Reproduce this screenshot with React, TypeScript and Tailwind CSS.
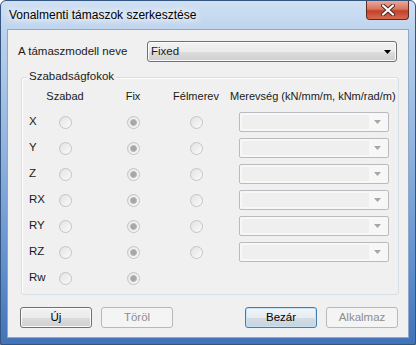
import React from 'react';

const rows = [
  { name: 'X', semi: true },
  { name: 'Y', semi: true },
  { name: 'Z', semi: true },
  { name: 'RX', semi: true },
  { name: 'RY', semi: true },
  { name: 'RZ', semi: true },
  { name: 'Rw', semi: false },
];

const Radio: React.FC<{ checked?: boolean }> = ({ checked }) => (
  <div className="w-[13px] h-[13px] rounded-full border border-[#c4c4c4] bg-gradient-to-br from-[#e2e2e2] to-[#fbfbfb] flex items-center justify-center">
    {checked && (
      <div className="w-[7px] h-[7px] rounded-full border border-[#b4b4b4] bg-[#a7a7a7] shadow-[0_0_0_1px_#f2f2f2]" />
    )}
  </div>
);

const DisabledCombo: React.FC = () => (
  <div className="w-[150px] h-[20px] border border-[#b8bcc0] rounded-[2px] bg-[#f7f7f7] flex p-[2px]">
    <div className="flex-1 bg-[#efefef]" />
    <div className="w-[17px] flex items-center justify-center">
      <svg width="7" height="4" viewBox="0 0 7 4">
        <path d="M0 0h7L3.5 4z" fill="#a6a6a6" />
      </svg>
    </div>
  </div>
);

const Button: React.FC<{ label: string; variant?: 'normal' | 'disabled' | 'default' }> = ({
  label,
  variant = 'normal',
}) => {
  if (variant === 'disabled') {
    return (
      <div className="w-[72px] h-[21px] rounded-[3px] border border-[#b5b9bc] bg-[#f4f4f4] flex items-center justify-center text-[#8d8d8d]">
        {label}
      </div>
    );
  }
  if (variant === 'default') {
    return (
      <div className="w-[72px] h-[21px] rounded-[3px] border border-[#3c7fb1] bg-[linear-gradient(#f1f5f8_0%,#e6ecf1_50%,#d4dde5_51%,#c9d3dc_100%)] shadow-[inset_0_0_0_1px_#c5e4f7] flex items-center justify-center text-black">
        {label}
      </div>
    );
  }
  return (
    <div className="w-[72px] h-[21px] rounded-[3px] border border-[#707070] bg-[linear-gradient(#f2f2f2_0%,#ebebeb_50%,#dddddd_51%,#cfcfcf_100%)] shadow-[inset_0_0_0_1px_#fbfbfb] flex items-center justify-center text-black">
      {label}
    </div>
  );
};

export default function App() {
  return (
    <div className="w-[416px] h-[345px] font-['Liberation_Sans',Arial,sans-serif] text-[11px] text-[#1a1a1a] leading-none">
      <div className="w-full h-full flex flex-col rounded-t-[6px] border border-[#33557f] bg-[linear-gradient(#cfe0f3_0%,#b7cfeb_12%,#8fb2de_45%,#5d8ccb_80%,#4272b8_100%)]">
        {/* title bar */}
        <div className="h-[28px] flex items-start">
          <div className="pl-[8px] pt-[8px] text-[12px] text-black [text-shadow:0_0_6px_#ffffff,0_0_10px_#ffffff,0_0_14px_#ffffff]">
            Vonalmenti támaszok szerkesztése
          </div>
          <div className="ml-auto mr-[6px] w-[43px] h-[19px] rounded-b-[4px] border border-t-0 border-[#5a2a22] bg-[linear-gradient(#e9a99a_0%,#d9745e_45%,#c4412a_55%,#d86a4f_100%)] flex items-center justify-center">
            <svg width="14" height="12" viewBox="0 0 14 12">
              <path d="M2 1.5l10 9M12 1.5l-10 9" stroke="#4a2520" strokeWidth="4" strokeLinecap="round" />
              <path d="M2 1.5l10 9M12 1.5l-10 9" stroke="#ffffff" strokeWidth="2.2" strokeLinecap="round" />
            </svg>
          </div>
        </div>

        {/* client area */}
        <div className="flex-1 mx-[6px] mb-[6px] border border-[#8ea8c9] bg-[#f0f0f0] flex flex-col">
          <div className="flex items-center mt-[11px] pl-[10px]">
            <div className="w-[129px] text-[11.5px]">A támaszmodell neve</div>
            <div className="w-[250px] h-[21px] rounded-[3px] border border-[#707070] bg-[linear-gradient(#f2f2f2_0%,#ebebeb_50%,#dddddd_51%,#cfcfcf_100%)] shadow-[inset_0_0_0_1px_#fbfbfb] flex items-center pl-[3px] pr-[5px]">
              <span className="flex-1 text-[11.5px]">Fixed</span>
              <svg width="7" height="4" viewBox="0 0 7 4">
                <path d="M0 0h7L3.5 4z" fill="#000" />
              </svg>
            </div>
          </div>

          {/* group box */}
          <div className="relative mt-[15px] ml-[13px] w-[378px] h-[218px] border border-[#d5dfe5] rounded-[3px] shadow-[inset_1px_1px_0_#ffffff] pl-[7px] pt-[5px]">
            <div className="absolute -top-[7px] left-[5px] px-[2px] bg-[#f0f0f0] text-[11.5px]">Szabadságfokok</div>
            <div className="flex items-center h-[26px] whitespace-nowrap">
              <div className="w-[16px] shrink-0" />
              <div className="w-[40px] min-w-0 shrink-0 flex justify-center">Szabad</div>
              <div className="w-[96px] min-w-0 shrink-0 flex justify-center">Fix</div>
              <div className="w-[30px] min-w-0 shrink-0 flex justify-center">Félmerev</div>
              <div className="pl-[19px]">Merevség (kN/mm/m, kNm/rad/m)</div>
            </div>
            {rows.map((r) => (
              <div key={r.name} className="flex items-center h-[26px] text-[11.5px]">
                <div className="w-[16px] shrink-0">{r.name}</div>
                <div className="w-[40px] shrink-0 flex justify-center">
                  <Radio />
                </div>
                <div className="w-[96px] shrink-0 flex justify-center">
                  <Radio checked />
                </div>
                <div className="w-[30px] shrink-0 flex justify-center">{r.semi && <Radio />}</div>
                {r.semi && (
                  <div className="ml-[28px]">
                    <DisabledCombo />
                  </div>
                )}
              </div>
            ))}
          </div>

          {/* buttons */}
          <div className="flex items-center mt-[12px] pl-[12px] text-[11.5px]">
            <Button label="Új" />
            <div className="ml-[9px]">
              <Button label="Töröl" variant="disabled" />
            </div>
            <div className="ml-[72px]">
              <Button label="Bezár" variant="default" />
            </div>
            <div className="ml-[9px]">
              <Button label="Alkalmaz" variant="disabled" />
            </div>
          </div>
        </div>
      </div>
    </div>
  );
}
